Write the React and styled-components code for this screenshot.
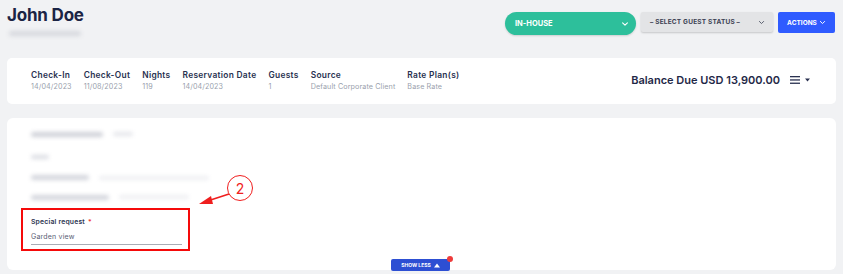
import React from 'react'
import styled, { createGlobalStyle } from 'styled-components'

const GlobalStyle = createGlobalStyle`
  body {
    margin: 0;
    background: #f1f2f4;
    font-family: Inter, "Noto Sans", sans-serif;
  }
`

const Page = styled.div`
  width: 843px;
  height: 274px;
  overflow: hidden;
  padding: 0 7px;
  box-sizing: border-box;
`

const Header = styled.div`
  display: flex;
  justify-content: space-between;
  align-items: flex-start;
  height: 58px;
`

const NameBlock = styled.div`
  padding-top: 5px;
`

const Name = styled.h1`
  margin: 0;
  font-size: 17px;
  line-height: 20px;
  font-weight: 700;
  color: #1b2444;
  letter-spacing: -0.2px;
`

const Blur = styled.div`
  width: ${p => p.w}px;
  height: ${p => p.h || 4}px;
  margin: ${p => p.m || '0'};
  background: ${p => p.c || '#d6d8de'};
  border-radius: 3px;
  filter: blur(${p => p.b || 2}px);
`

const Actions = styled.div`
  display: flex;
  align-items: flex-start;
  gap: 5px;
  padding-top: 12px;
  padding-right: 1px;
`

const StatusPill = styled.div`
  width: 131px;
  height: 23px;
  border-radius: 12px;
  background: #2dbf9b;
  color: #fff;
  font-size: 7.5px;
  font-weight: 700;
  display: flex;
  align-items: center;
  justify-content: space-between;
  padding: 0 7px 0 10px;
  box-sizing: border-box;
  box-shadow: 0 1px 2px rgba(0, 0, 0, 0.15);
`

const SelectBox = styled.div`
  width: 132px;
  height: 20px;
  background: #e3e4e6;
  color: #3b4152;
  font-size: 6.5px;
  font-weight: 700;
  letter-spacing: 0.2px;
  display: flex;
  align-items: center;
  justify-content: space-between;
  padding: 0 8px 0 9px;
  box-sizing: border-box;
  border-radius: 2px;
  box-shadow: 0 1px 2px rgba(0, 0, 0, 0.18);
`

const ActionButton = styled.div`
  width: 57px;
  height: 21px;
  background: #2f5bff;
  color: #fff;
  font-size: 6.5px;
  font-weight: 700;
  display: flex;
  align-items: center;
  justify-content: center;
  gap: 2px;
  border-radius: 2px;
`

const Chevron = ({ size = 7, color = '#fff' }) => (
  <svg width={size} height={size} viewBox="0 0 10 10">
    <polyline points="2,3.5 5,6.5 8,3.5" fill="none" stroke={color} strokeWidth="1.4" strokeLinecap="round" strokeLinejoin="round" />
  </svg>
)

const Card = styled.div`
  background: #fff;
  border-radius: 5px;
`

const InfoCard = styled(Card)`
  height: 46px;
  display: flex;
  align-items: center;
  justify-content: space-between;
  padding: 0 26px 0 24px;
  box-sizing: border-box;
`

const Stats = styled.div`
  display: flex;
  gap: 12px;
  margin-top: -2px;
`

const Stat = styled.div`
  display: flex;
  flex-direction: column;
  gap: 2px;
`

const StatLabel = styled.span`
  font-size: 8.4px;
  font-weight: 600;
  letter-spacing: 0.3px;
  color: #283150;
  white-space: nowrap;
`

const StatValue = styled.span`
  font-size: 7.2px;
  letter-spacing: 0.1px;
  color: #9a9fad;
  white-space: nowrap;
`

const Balance = styled.div`
  display: flex;
  align-items: center;
  gap: 10px;
  color: #1f2847;
  font-size: 11px;
  font-weight: 600;
  margin-top: -2px;
`

const MenuIcon = styled.div`
  display: flex;
  align-items: center;
  gap: 5px;
`

const DetailsCard = styled(Card)`
  position: relative;
  margin-top: 14px;
  height: 152px;
  padding: 4px 14px 0 14px;
  box-sizing: border-box;
  border-radius: 6px;
`

const BlurRow = styled.div`
  display: flex;
  align-items: center;
  gap: 10px;
  height: ${p => p.h || 22}px;
  padding-left: 10px;
`

const Highlight = styled.div`
  width: 169px;
  height: 43px;
  border: 2px solid #f50a0a;
  box-sizing: border-box;
  padding: 7px 6px 0 8px;
  margin-top: 2px;
`

const FieldLabel = styled.div`
  font-size: 6.8px;
  font-weight: 600;
  letter-spacing: 0.2px;
  color: #2c3450;
  span {
    color: #f03030;
    margin-left: 3px;
  }
`

const FieldValue = styled.div`
  font-size: 7px;
  letter-spacing: 0.2px;
  color: #5a6075;
  margin-top: 6px;
  padding-bottom: 3px;
  border-bottom: 1px solid #a9acb5;
`

const Callout = styled.div`
  position: absolute;
  left: 220px;
  top: 57px;
  width: 26px;
  height: 26px;
  border: 1.5px solid #f01e1e;
  border-radius: 50%;
  background: #fff;
  color: #ef2020;
  font-size: 14px;
  display: flex;
  align-items: center;
  justify-content: center;
  box-sizing: border-box;
`

const Arrow = styled.svg`
  position: absolute;
  left: 180px;
  top: 68px;
`

const ShowLess = styled.div`
  position: absolute;
  left: 384px;
  bottom: -1px;
  width: 59px;
  height: 12px;
  background: #2d4fd3;
  border-radius: 2px;
  color: #fff;
  font-size: 5px;
  font-weight: 700;
  display: flex;
  align-items: center;
  justify-content: center;
  gap: 3px;
  &::after {
    content: '';
    position: absolute;
    right: -3px;
    top: -3px;
    width: 6px;
    height: 6px;
    border-radius: 50%;
    background: #ee3b3b;
  }
`

const stats = [
  ['Check-In', '14/04/2023'],
  ['Check-Out', '11/08/2023'],
  ['Nights', '119'],
  ['Reservation Date', '14/04/2023'],
  ['Guests', '1'],
  ['Source', 'Default Corporate Client'],
  ['Rate Plan(s)', 'Base Rate'],
]

export default function App() {
  return (
    <Page>
      <GlobalStyle />
      <Header>
        <NameBlock>
          <Name>John Doe</Name>
          <Blur w={72} h={5} m="6px 0 0 2px" />
        </NameBlock>
        <Actions>
          <StatusPill>
            IN-HOUSE
            <Chevron size={8} />
          </StatusPill>
          <SelectBox>
            – SELECT GUEST STATUS –
            <Chevron size={7} color="#555b6b" />
          </SelectBox>
          <ActionButton>
            ACTIONS
            <Chevron size={7} />
          </ActionButton>
        </Actions>
      </Header>

      <InfoCard>
        <Stats>
          {stats.map(([label, value]) => (
            <Stat key={label}>
              <StatLabel>{label}</StatLabel>
              <StatValue>{value}</StatValue>
            </Stat>
          ))}
        </Stats>
        <Balance>
          Balance Due USD 13,900.00
          <MenuIcon>
            <svg width="10" height="8" viewBox="0 0 10 8">
              <rect x="0" y="0" width="10" height="1.3" fill="#2a3150" />
              <rect x="0" y="3.3" width="10" height="1.3" fill="#2a3150" />
              <rect x="0" y="6.6" width="10" height="1.3" fill="#2a3150" />
            </svg>
            <svg width="5" height="4" viewBox="0 0 5 4">
              <polygon points="0,0.5 5,0.5 2.5,3.5" fill="#2a3150" />
            </svg>
          </MenuIcon>
        </Balance>
      </InfoCard>

      <DetailsCard>
        <BlurRow h={24}>
          <Blur w={72} h={5} c="#cfd1d8" />
          <Blur w={20} h={4} c="#e4e5ea" />
        </BlurRow>
        <BlurRow h={21}>
          <Blur w={18} h={4} c="#dadce2" />
        </BlurRow>
        <BlurRow h={21}>
          <Blur w={58} h={5} c="#d3d5dc" />
          <Blur w={110} h={4} c="#eeeff2" />
        </BlurRow>
        <BlurRow h={18}>
          <Blur w={78} h={5} c="#d3d5dc" />
          <Blur w={70} h={4} c="#eeeff2" />
        </BlurRow>
        <Highlight>
          <FieldLabel>
            Special request<span>*</span>
          </FieldLabel>
          <FieldValue>Garden view</FieldValue>
        </Highlight>

        <Arrow width="50" height="24" viewBox="0 0 50 24">
          <line x1="42" y1="8" x2="22" y2="14.5" stroke="#ef1e1e" strokeWidth="1.6" />
          <polygon points="12,18 24,10 26,18" fill="#ef1e1e" />
        </Arrow>
        <Callout>2</Callout>

        <ShowLess>
          SHOW LESS
          <svg width="6" height="5" viewBox="0 0 6 5">
            <polygon points="0,4.5 6,4.5 3,0.5" fill="#fff" />
          </svg>
        </ShowLess>
      </DetailsCard>
    </Page>
  )
}
